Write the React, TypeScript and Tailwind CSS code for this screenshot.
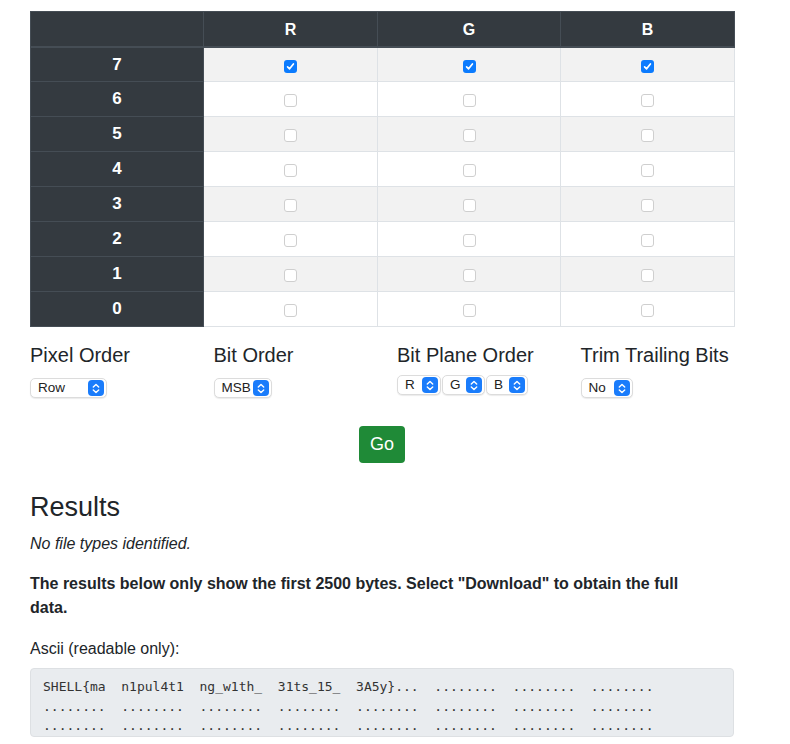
import React from "react";

const bits = [7, 6, 5, 4, 3, 2, 1, 0];

const CheckBox = ({ checked }: { checked: boolean }) =>
  checked ? (
    <span className="inline-flex w-[13px] h-[13px] rounded-[3px] bg-[#0b7bfe] items-center justify-center align-middle">
      <svg width="9" height="9" viewBox="0 0 9 9">
        <path d="M1.6 4.8 L3.6 6.8 L7.4 2" fill="none" stroke="#fff" strokeWidth="1.7" strokeLinecap="round" strokeLinejoin="round" />
      </svg>
    </span>
  ) : (
    <span className="inline-block w-[13px] h-[13px] rounded-[3px] bg-white border border-[#cfcfcf] align-middle" />
  );

const Stepper = () => (
  <span className="inline-flex w-[16px] h-[16px] rounded-[4px] bg-[#1a7cfb] items-center justify-center">
    <svg width="8" height="11" viewBox="0 0 8 11">
      <path d="M1.3 4 L4 1.4 L6.7 4 M1.3 7 L4 9.6 L6.7 7" fill="none" stroke="#fff" strokeWidth="1.4" strokeLinecap="round" strokeLinejoin="round" />
    </svg>
  </span>
);

const Select = ({ value, width }: { value: string; width: string }) => (
  <div
    className={`inline-flex items-center justify-between h-[20px] rounded-[5px] bg-white border border-[#dcdcdc] shadow-[0_1px_1px_rgba(0,0,0,0.08)] pl-[7px] pr-[2px] text-[13.5px] text-[#222] ${width}`}
  >
    <span>{value}</span>
    <Stepper />
  </div>
);

const dotsLine = Array(8).fill("........").join("  ");

export default function App() {
  return (
    <div
      className="bg-white text-[#212529] pl-[30px] pt-[11px] w-[790px] h-[744px] overflow-hidden"
      style={{ fontFamily: '"Liberation Sans", Arial, sans-serif' }}
    >
      <div className="w-[704px]">
        <table className="w-[704px] border-collapse table-fixed">
          <colgroup>
            <col className="w-[173px]" />
            <col className="w-[174px]" />
            <col className="w-[183px]" />
            <col className="w-[174px]" />
          </colgroup>
          <thead>
            <tr className="h-[35px] bg-[#343a40] text-white">
              <th className="border border-[#454d55] border-b-2"></th>
              <th className="border border-[#454d55] border-b-2 text-[16px] font-bold pt-[2px]">R</th>
              <th className="border border-[#454d55] border-b-2 text-[16px] font-bold pt-[2px]">G</th>
              <th className="border border-[#454d55] border-b-2 text-[16px] font-bold pt-[2px]">B</th>
            </tr>
          </thead>
          <tbody>
            {bits.map((b, i) => (
              <tr key={b} className={`h-[35px] ${i % 2 === 0 ? "bg-[#f2f2f2]" : "bg-white"}`}>
                <th className="bg-[#343a40] text-white border border-[#454d55] text-[17px] font-bold">{b}</th>
                {["R", "G", "B"].map((c) => (
                  <td key={c} className="border border-[#dee2e6] text-center leading-none pt-[2px]">
                    <CheckBox checked={b === 7} />
                  </td>
                ))}
              </tr>
            ))}
          </tbody>
        </table>

        <div className="grid grid-cols-4 -mx-[15px] w-[734px] mt-[16px]">
          <div className="px-[15px]">
            <h5 className="text-[20px] leading-[24px] font-medium">Pixel Order</h5>
            <div className="mt-[8px]">
              <Select value="Row" width="w-[77px]" />
            </div>
          </div>
          <div className="px-[15px]">
            <h5 className="text-[20px] leading-[24px] font-medium">Bit Order</h5>
            <div className="mt-[8px]">
              <Select value="MSB" width="w-[58px]" />
            </div>
          </div>
          <div className="px-[15px]">
            <h5 className="text-[20px] leading-[24px] font-medium">Bit Plane Order</h5>
            <div className="mt-[8px] flex gap-[1px]">
              <Select value="R" width="w-[44px]" />
              <Select value="G" width="w-[43px]" />
              <Select value="B" width="w-[42px]" />
            </div>
          </div>
          <div className="px-[15px]">
            <h5 className="text-[20px] leading-[24px] font-medium">Trim Trailing Bits</h5>
            <div className="mt-[8px]">
              <Select value="No" width="w-[52px]" />
            </div>
          </div>
        </div>

        <div className="flex justify-center mt-[27px]">
          <button className="w-[46px] h-[37px] rounded-[4px] bg-[#1f8a37] text-white text-[18px]">Go</button>
        </div>

        <h2 className="mt-[28px] text-[27px] leading-[32px] font-medium">Results</h2>
        <p className="mt-[9px] text-[16px] leading-[24px] italic">No file types identified.</p>
        <p className="mt-[16px] text-[16px] leading-[24px] font-bold pr-[30px]">
          The results below only show the first 2500 bytes. Select "Download" to obtain the full data.
        </p>
        <p className="mt-[17px] text-[16px] leading-[24px]">Ascii (readable only):</p>
        <pre
          className="mt-[7px] h-[69px] overflow-hidden rounded-[4px] bg-[#e9ecef] border border-[#dde0e3] pl-[12px] pt-[8px] text-[13px] leading-[19.5px] text-[#333]"
          style={{ fontFamily: '"DejaVu Sans Mono", "Liberation Mono", monospace' }}
        >
          {"SHELL{ma  n1pul4t1  ng_w1th_  31ts_15_  3A5y}...  ........  ........  ........\n"}
          {dotsLine + "\n"}
          {dotsLine}
        </pre>
        <p className="mt-[4px] text-[16px] leading-[24px]">Hex (all bytes):</p>
      </div>
    </div>
  );
}
